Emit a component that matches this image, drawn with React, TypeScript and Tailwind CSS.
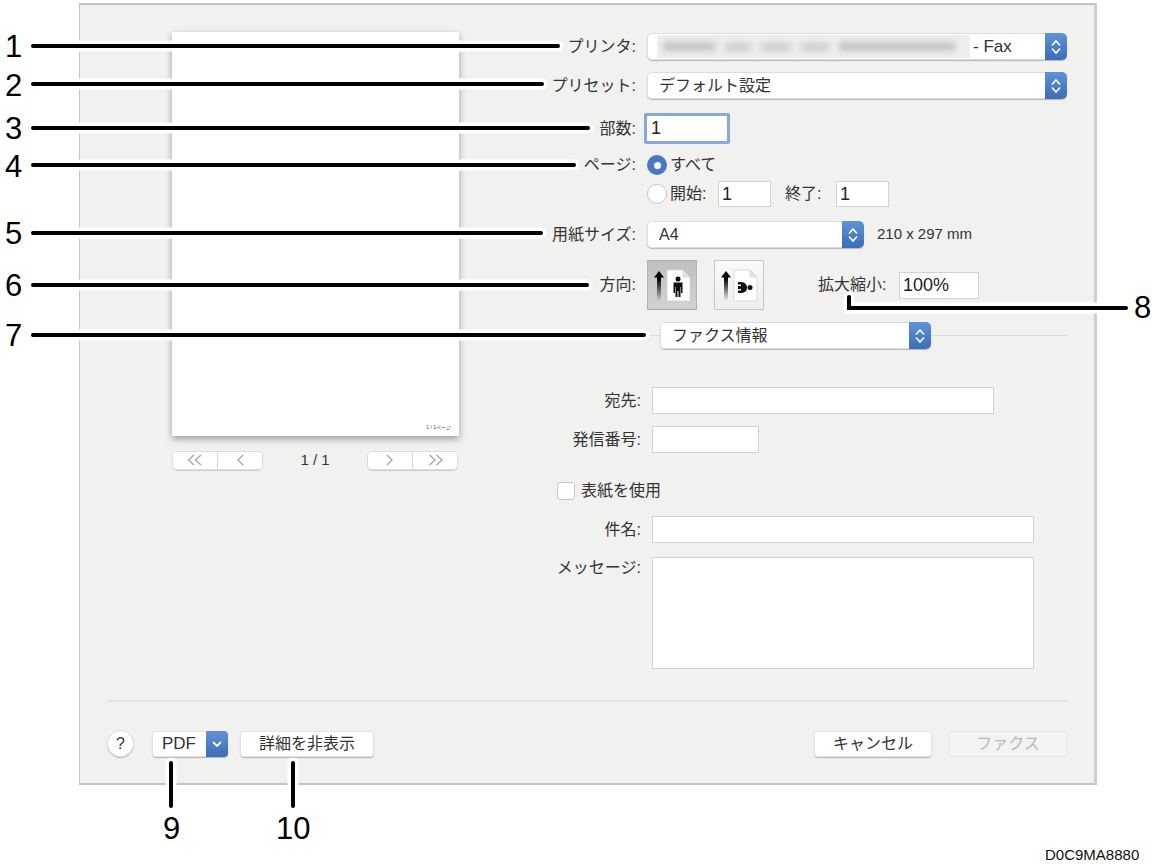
import type { ReactNode } from "react";

function Chevrons() {
  return (
    <svg width="12" height="18" viewBox="0 0 12 18" fill="none" stroke="white" strokeWidth="1.6">
      <path d="M2 7.5 L6 3 L10 7.5" />
      <path d="M2 10.5 L6 15 L10 10.5" />
    </svg>
  );
}

function Popup({ className, children }: { className: string; children: ReactNode }) {
  return (
    <div
      className={`flex h-[27px] items-stretch overflow-hidden rounded-[5px] bg-white text-[16px] leading-[22px] text-[#333] shadow-[inset_0_0_0_1px_#dcdcdc,0_1px_1px_rgba(0,0,0,0.25)] ${className}`}
    >
      <div className="flex min-w-0 flex-1 items-center pl-[12px]">{children}</div>
      <div className="flex w-[22px] items-center justify-center bg-gradient-to-b from-[#5f93d8] to-[#3c6db5]">
        <Chevrons />
      </div>
    </div>
  );
}

function Field({ className, children }: { className: string; children?: ReactNode }) {
  return (
    <div
      className={`flex items-center border border-[#d2d2d2] bg-white pl-[3px] text-[18px] leading-[22px] text-[#222] ${className}`}
    >
      {children}
    </div>
  );
}

function Row({
  label,
  wide,
  className = "",
  children,
}: {
  label?: string;
  wide?: boolean;
  className?: string;
  children: ReactNode;
}) {
  return (
    <div className={`flex items-center ${className}`}>
      <div
        className={`shrink-0 pr-[11px] text-right text-[16px] leading-[22px] text-[#333] ${wide ? "w-[171px]" : "w-[166px]"}`}
      >
        {label}
      </div>
      {children}
    </div>
  );
}

function Radio({ checked }: { checked?: boolean }) {
  return checked ? (
    <div className="flex h-[20px] w-[20px] items-center justify-center rounded-full bg-[#4a78c2]">
      <div className="h-[7px] w-[7px] rounded-full bg-white" />
    </div>
  ) : (
    <div className="h-[20px] w-[20px] rounded-full border border-[#c8c8c8] bg-white" />
  );
}

function PagerButton({ paths }: { paths: string[] }) {
  return (
    <div className="flex flex-1 items-center justify-center">
      <svg width="18" height="14" viewBox="0 0 18 14" fill="none" stroke="#a9a9a9" strokeWidth="1.4">
        {paths.map((d) => (
          <path key={d} d={d} />
        ))}
      </svg>
    </div>
  );
}

function Pager({ first, second }: { first: string[]; second: string[] }) {
  return (
    <div className="flex h-[19px] w-[91px] divide-x divide-[#d6d6d6] rounded-[5px] bg-white shadow-[inset_0_0_0_1px_#dcdcdc,0_1px_1px_rgba(0,0,0,0.15)]">
      <PagerButton paths={first} />
      <PagerButton paths={second} />
    </div>
  );
}

function OrientationIcon({ landscape }: { landscape?: boolean }) {
  const fade = landscape ? "fadeB" : "fadeA";
  return (
    <svg width="48" height="48" viewBox="1 1 48 48">
      <defs>
        <linearGradient id={fade} x1="0" y1="0" x2="0" y2="1">
          <stop offset="0.25" stopColor="#000" />
          <stop offset="1" stopColor="#000" stopOpacity="0" />
        </linearGradient>
      </defs>
      <path d="M12 11 L17 17.5 L14 17.5 L14 41 L10 41 L10 17.5 L7 17.5 Z" fill={`url(#${fade})`} />
      <path d="M20 10 H36 L43 17 V41 H20 Z" fill="white" stroke="#d2d2d2" strokeWidth="0.8" />
      <path d="M36 10 L36 17 H43 Z" fill="#e4e4e4" stroke="#cfcfcf" strokeWidth="0.6" />
      {landscape ? (
        <g fill="#111">
          <path d="M24 22 H28 Q33 23 33 27.5 Q33 32 28 33 H24 V30.5 H27 V29 H24 V26 H27 V24.5 H24 Z" />
          <circle cx="36" cy="27.5" r="2.5" />
        </g>
      ) : (
        <g fill="#111">
          <circle cx="31" cy="19" r="2.5" />
          <path d="M26.5 22.5 H35.5 V33 H34 V27 H33.5 V37 H31.5 V31 H30.5 V37 H28.5 V27 H28 V33 H26.5 Z" />
        </g>
      )}
    </svg>
  );
}

const leaders = [
  "M33 46 H558",
  "M33 84 H542",
  "M33 128 H588",
  "M33 165 H574",
  "M33 233 H541",
  "M33 285 H587",
  "M33 335 H644",
  "M1126 308 H849 V297",
  "M171 763 V806",
  "M293 763 V806",
];

const numbers: [string, string][] = [
  ["1", "left-[5px] top-[29px]"],
  ["2", "left-[5px] top-[68px]"],
  ["3", "left-[5px] top-[111px]"],
  ["4", "left-[5px] top-[149px]"],
  ["5", "left-[5px] top-[216px]"],
  ["6", "left-[5px] top-[268px]"],
  ["7", "left-[5px] top-[318px]"],
  ["8", "left-[1134px] top-[290px]"],
  ["9", "left-[163px] top-[811px]"],
  ["10", "left-[276px] top-[811px]"],
];

const btn = "shadow-[inset_0_0_0_1px_#e2e2e2,0_1px_1px_rgba(0,0,0,0.25)]";

export default function App() {
  return (
    <div className="relative h-[865px] w-[1153px] overflow-hidden bg-white font-['Liberation_Sans','Noto_Sans_CJK_JP',sans-serif]">
      <div className="pl-[79px] pt-[3px]">
        <div className="h-[782px] w-[1018px] border-b-2 border-l border-r-[3px] border-t-2 border-b-[#c4c4c4] border-l-[#c4c4c4] border-r-[#d0d0d0] border-t-[#c4c4c4] bg-[#f1f1f0]">
          <div className="flex h-[695px]">
            {/* Preview */}
            <div className="w-[401px] shrink-0 pl-[92px] pt-[27px]">
              <div className="relative h-[404px] w-[287px] bg-white shadow-[0_3px_7px_rgba(0,0,0,0.35)]">
                <span className="absolute bottom-[5px] right-[8px] text-[5px] text-[#444]">1 / 1ページ</span>
              </div>
              <div className="mt-[13px] flex w-[286px] items-center justify-between">
                <Pager
                  first={["M8 2 L2.5 7 L8 12", "M15 2 L9.5 7 L15 12"]}
                  second={["M11 2 L6 7 L11 12"]}
                />
                <span className="text-[15px] text-[#333]">1 / 1</span>
                <Pager
                  first={["M6 2 L11 7 L6 12"]}
                  second={["M2.5 2 L8 7 L2.5 12", "M9.5 2 L15 7 L9.5 12"]}
                />
              </div>
            </div>

            {/* Settings */}
            <div className="flex-1 pt-[28px]">
              <Row label="プリンタ:">
                <Popup className="w-[420px]">
                  <div className="-ml-[2px] flex h-[23px] w-[313px] shrink-0 items-center gap-[10px] overflow-hidden bg-[#eeeeee] pl-[6px] pr-[6px]">
                    <div className="h-[9px] w-[52px] bg-[#c4c4c4] blur-[3px]" />
                    <div className="h-[8px] w-[26px] bg-[#cccccc] blur-[3px]" />
                    <div className="h-[8px] w-[30px] bg-[#cccccc] blur-[3px]" />
                    <div className="h-[8px] w-[28px] bg-[#cccccc] blur-[3px]" />
                    <div className="h-[9px] w-[116px] bg-[#c4c4c4] blur-[3px]" />
                  </div>
                  <span className="ml-[3px] whitespace-nowrap text-[17px]">- Fax</span>
                </Popup>
              </Row>
              <Row label="プリセット:" className="mt-[12px]">
                <Popup className="w-[420px]">デフォルト設定</Popup>
              </Row>
              <Row label="部数:" className="mt-[14px]">
                <div className="-ml-[3px] flex h-[31px] w-[86px] items-center rounded-[2px] border-[3px] border-[#88a8dc] bg-white pl-[4px] text-[18px] text-[#222]">
                  1
                </div>
              </Row>
              <Row label="ページ:" className="mt-[9px] h-[24px]">
                <div className="flex items-center gap-[3px] text-[16px] text-[#333]">
                  <Radio checked />
                  すべて
                </div>
              </Row>
              <Row className="mt-[4px] h-[26px]">
                <div className="flex items-center text-[16px] text-[#333]">
                  <Radio />
                  <span className="ml-[3px] w-[48px]">開始:</span>
                  <Field className="h-[26px] w-[53px]">1</Field>
                  <span className="ml-[14px] w-[51px]">終了:</span>
                  <Field className="h-[26px] w-[53px]">1</Field>
                </div>
              </Row>
              <Row label="用紙サイズ:" className="mt-[14px]">
                <Popup className="w-[217px]">A4</Popup>
                <span className="ml-[13px] text-[15px] text-[#333]">210 x 297 mm</span>
              </Row>
              <Row label="方向:" className="mt-[12px]">
                <div className="flex h-[50px] w-[50px] items-center justify-center border border-[#b0b0b0] bg-gradient-to-b from-[#c0c0c0] to-[#d2d2d2]">
                  <OrientationIcon />
                </div>
                <div className="ml-[17px] flex h-[50px] w-[50px] items-center justify-center border border-[#c6c6c6] bg-gradient-to-b from-[#fafafa] to-[#eeeeee]">
                  <OrientationIcon landscape />
                </div>
                <span className="ml-[54px] w-[81px] text-[16px] text-[#333]">拡大縮小:</span>
                <Field className="h-[27px] w-[80px]">100%</Field>
              </Row>

              <div className="mt-[12px] flex items-center pl-[167px] pr-[26px]">
                <div className="h-px w-[12px] bg-[#dcdcdc]" />
                <Popup className="w-[271px]">ファクス情報</Popup>
                <div className="h-px flex-1 bg-[#dcdcdc]" />
              </div>

              <Row label="宛先:" wide className="mt-[38px]">
                <Field className="h-[27px] w-[342px]" />
              </Row>
              <Row label="発信番号:" wide className="mt-[12px]">
                <Field className="h-[27px] w-[107px]" />
              </Row>
              <div className="mt-[27px] flex items-center pl-[76px] text-[16px] leading-[22px] text-[#333]">
                <div className="mr-[6px] h-[18px] w-[18px] rounded-[3px] border border-[#c8c8c8] bg-white" />
                表紙を使用
              </div>
              <Row label="件名:" wide className="mt-[14px]">
                <Field className="h-[27px] w-[382px]" />
              </Row>
              <Row label="メッセージ:" wide className="mt-[14px] !items-start">
                <Field className="h-[112px] w-[382px]" />
              </Row>
            </div>
          </div>

          <div className="ml-[27px] mr-[26px] h-[2px] bg-[#e2e2e2]" />

          {/* Bottom bar */}
          <div className="flex items-center pl-[27px] pr-[27px] pt-[28px]">
            <div className="flex h-[27px] w-[27px] items-center justify-center rounded-full bg-white text-[16px] text-[#333] shadow-[inset_0_0_0_1px_#dcdcdc,0_1px_1px_rgba(0,0,0,0.25)]">
              ?
            </div>
            <div className={`ml-[18px] flex h-[26px] w-[76px] overflow-hidden rounded-[4px] bg-white text-[17px] text-[#333] ${btn}`}>
              <div className="flex flex-1 items-center justify-center">PDF</div>
              <div className="flex w-[22px] items-center justify-center bg-gradient-to-b from-[#5f93d8] to-[#3c6db5]">
                <svg width="12" height="8" viewBox="0 0 12 8" fill="none" stroke="white" strokeWidth="1.8">
                  <path d="M2 2 L6 6 L10 2" />
                </svg>
              </div>
            </div>
            <div className={`ml-[12px] flex h-[26px] w-[134px] items-center justify-center rounded-[4px] bg-white text-[16px] text-[#333] ${btn}`}>
              詳細を非表示
            </div>
            <div className={`ml-auto flex h-[26px] w-[118px] items-center justify-center rounded-[4px] bg-white text-[16px] text-[#333] ${btn}`}>
              キャンセル
            </div>
            <div className="ml-[17px] flex h-[26px] w-[118px] items-center justify-center rounded-[4px] bg-[#f3f3f3] text-[16px] text-[#b8b8b8] shadow-[inset_0_0_0_1px_#e8e8e8]">
              ファクス
            </div>
          </div>
        </div>
      </div>

      {/* Callout leaders */}
      <svg className="absolute left-0 top-0" width="1153" height="865" fill="none" strokeLinecap="round">
        {leaders.map((d) => (
          <path key={d} d={d} stroke="white" strokeWidth="11" />
        ))}
        {leaders.map((d) => (
          <path key={d + "k"} d={d} stroke="black" strokeWidth="4" />
        ))}
      </svg>
      {numbers.map(([n, pos]) => (
        <span key={n} className={`absolute text-[31px] leading-[36px] text-black ${pos}`}>
          {n}
        </span>
      ))}
      <span className="absolute left-[1045px] top-[847px] text-[15px] leading-[16px] text-[#111]">D0C9MA8880</span>
    </div>
  );
}
